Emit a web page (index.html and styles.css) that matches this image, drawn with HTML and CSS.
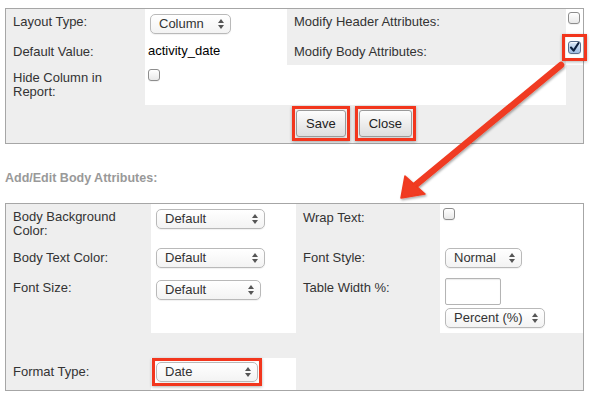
FILE: index.html
```html
<!DOCTYPE html>
<html>
<head>
<meta charset="utf-8">
<link rel="stylesheet" href="styles.css">
</head>
<body>
<div class="page">
  <div class="panel panel-top">
    <div class="cell lab pt6">Layout Type:</div>
    <div class="cell val white pt5"><span class="sel w81"><span class="sel-t">Column</span><svg class="updown" width="6" height="10" viewBox="0 0 6 10"><path d="M0 4 L3 0 L6 4 Z M0 6 L3 10 L6 6 Z"/></svg></span></div>
    <div class="cell lab pt6">Modify Header Attributes:</div>
    <div class="cell val2 white pt3"><span class="cb"></span></div>

    <div class="cell lab pt7">Default Value:</div>
    <div class="cell val white pt6"><span class="value">activity_date</span></div>
    <div class="cell lab pt7">Modify Body Attributes:</div>
    <div class="cell val2 white pt3"><span class="cb checked mark mark-wide"><svg width="11" height="11" viewBox="0 0 11 11"><path d="M2 5.5 L4.6 8.6 L9.4 1.2" fill="none" stroke="#0c1f3d" stroke-width="2.1" stroke-linecap="round" stroke-linejoin="round"/></svg></span></div>

    <div class="cell lab pt6">Hide Column in Report:</div>
    <div class="cell val white pt4"><span class="cb"></span></div>
    <div class="cell white"></div>
    <div class="cell"></div>

    <div class="cell span2"></div>
    <div class="cell buttons span2">
      <button class="btn mark" type="button">Save</button>
      <button class="btn mark" type="button">Close</button>
    </div>
  </div>

  <div class="section-title">Add/Edit Body Attributes:</div>

  <div class="panel panel-body">
    <div class="cell lab pt6">Body Background Color:</div>
    <div class="cell val white pt5"><span class="sel w109"><span class="sel-t">Default</span><svg class="updown" width="6" height="10" viewBox="0 0 6 10"><path d="M0 4 L3 0 L6 4 Z M0 6 L3 10 L6 6 Z"/></svg></span></div>
    <div class="cell lab pt7">Wrap Text:</div>
    <div class="cell val white pt4"><span class="cb"></span></div>

    <div class="cell lab pt8">Body Text Color:</div>
    <div class="cell val white pt5"><span class="sel w109"><span class="sel-t">Default</span><svg class="updown" width="6" height="10" viewBox="0 0 6 10"><path d="M0 4 L3 0 L6 4 Z M0 6 L3 10 L6 6 Z"/></svg></span></div>
    <div class="cell lab pt8">Font Style:</div>
    <div class="cell val white pt5"><span class="sel w77"><span class="sel-t">Normal</span><svg class="updown" width="6" height="10" viewBox="0 0 6 10"><path d="M0 4 L3 0 L6 4 Z M0 6 L3 10 L6 6 Z"/></svg></span></div>

    <div class="cell lab pt7">Font Size:</div>
    <div class="cell val white pt6"><span class="sel w105"><span class="sel-t">Default</span><svg class="updown" width="6" height="10" viewBox="0 0 6 10"><path d="M0 4 L3 0 L6 4 Z M0 6 L3 10 L6 6 Z"/></svg></span></div>
    <div class="cell lab pt7">Table Width %:</div>
    <div class="cell val white pt4"><span class="text-input"></span><span class="sel w100"><span class="sel-t">Percent (%)</span><svg class="updown" width="6" height="10" viewBox="0 0 6 10"><path d="M0 4 L3 0 L6 4 Z M0 6 L3 10 L6 6 Z"/></svg></span></div>

    <div class="cell span4"></div>

    <div class="cell lab pt7">Format Type:</div>
    <div class="cell val white pt4"><span class="sel w102 mark"><span class="sel-t">Date</span><svg class="updown" width="6" height="10" viewBox="0 0 6 10"><path d="M0 4 L3 0 L6 4 Z M0 6 L3 10 L6 6 Z"/></svg></span></div>
    <div class="cell span2"></div>
  </div>
</div>

<svg class="annot" width="592" height="397" viewBox="0 0 592 397">
  <defs>
    <filter id="sh" x="-10%" y="-10%" width="130%" height="130%">
      <feDropShadow dx="1" dy="1.5" stdDeviation="1.2" flood-color="#000" flood-opacity="0.35"/>
    </filter>
  </defs>
  <g filter="url(#sh)" fill="#f03a20" stroke="#f03a20">
    <line x1="561" y1="65" x2="412" y2="188" stroke-width="6.5" stroke-linecap="round"/>
    <polygon points="401,198 405,176 425,194" stroke-width="1.5" stroke-linejoin="round"/>
  </g>
</svg>
</body>
</html>
```

FILE: styles.css
```css
* {
  box-sizing: border-box;
}

html,
body {
  margin: 0;
  padding: 0;
  background: #fff;
}

body {
  position: relative;
  width: 592px;
  height: 397px;
  overflow: hidden;
  font-family: "Liberation Sans", Arial, Helvetica, sans-serif;
  font-size: 13px;
  color: #333;
}

.page {
  padding: 8px 0 0 5px;
}

.panel {
  display: grid;
  width: 579px;
  border: 1px solid #a6a6a6;
  background: #eeeeee;
}

.panel-top {
  grid-template-columns: 139px 142px 279px 17px;
  grid-template-rows: 29px 27px 40px 38px;
}

.panel-body {
  grid-template-columns: 145px 145px 144px 143px;
  grid-template-rows: 39px 31px 59px 25px 32px;
}

.cell {
  line-height: 14px;
  padding: 0;
}

.lab {
  padding-left: 7px;
  padding-right: 4px;
}

.val {
  padding-left: 3px;
}

.val2 {
  padding-left: 2px;
}

.white {
  background: #fff;
}

.pt3 { padding-top: 3px; }
.pt4 { padding-top: 4px; }
.pt5 { padding-top: 5px; }
.pt6 { padding-top: 6px; }
.pt7 { padding-top: 7px; }
.pt8 { padding-top: 8px; }

.span2 {
  grid-column: span 2;
}

.span4 {
  grid-column: span 4;
}

.value {
  color: #000;
}

/* Mac-style popup select */
.sel {
  position: relative;
  display: flex;
  align-items: center;
  justify-content: space-between;
  height: 20px;
  margin-left: 2px;
  padding: 0 6px 0 8px;
  border: 1px solid #b9b9b9;
  border-radius: 5px;
  background: linear-gradient(#ffffff, #f3f3f3);
  box-shadow: 0 1px 1px rgba(0, 0, 0, 0.06);
  color: #333;
  font-size: 13px;
  line-height: 18px;
  white-space: nowrap;
}

.sel-t {
  display: block;
}

.updown {
  display: block;
  fill: #555;
}

.w77 { width: 77px; }
.w81 { width: 81px; }
.w100 { width: 100px; }
.w102 { width: 102px; }
.w105 { width: 105px; }
.w109 { width: 109px; }

.text-input {
  display: block;
  width: 56px;
  height: 27px;
  margin: 0 0 3px 2px;
  border: 1px solid #b4b4b4;
  border-radius: 2px;
  background: #fff;
  box-shadow: inset 0 1px 1px rgba(0, 0, 0, 0.08);
}

/* checkbox */
.cb {
  position: relative;
  display: flex;
  align-items: center;
  justify-content: center;
  width: 12px;
  height: 12px;
  border: 1px solid #8d8d8d;
  border-radius: 3px;
  background: linear-gradient(#ffffff, #e9e9e9);
  box-shadow: inset 0 1px 1px rgba(255, 255, 255, 0.8), 0 1px 0 rgba(0, 0, 0, 0.05);
}

.cb.checked {
  width: 13px;
  height: 13px;
  border-color: #5a6f8e;
  background: linear-gradient(#dbe8f7, #9dbde3);
}

.cb.checked svg {
  display: block;
  margin-top: -1px;
}

/* annotation boxes (square red frames drawn over the controls) */
.mark {
  position: relative;
}

.mark::after {
  content: "";
  position: absolute;
  top: -5px;
  right: -5px;
  bottom: -5px;
  left: -5px;
  border: 3px solid #f2361d;
  box-shadow: 0 1px 3px rgba(0, 0, 0, 0.3), inset 0 0 1px rgba(0, 0, 0, 0.15);
  pointer-events: none;
}

.mark-wide::after {
  top: -8px;
  right: -7px;
  bottom: -8px;
  left: -7px;
}

.buttons {
  display: flex;
  align-items: flex-start;
  gap: 13px;
  padding: 5px 0 0 9px;
}

.btn {
  height: 27px;
  margin: 0;
  padding: 0 9px;
  border: 1px solid #9a9a9a;
  border-radius: 3px;
  background: linear-gradient(#fdfdfd, #dedede);
  color: #222;
  font-family: "Liberation Sans", Arial, Helvetica, sans-serif;
  font-size: 13px;
  line-height: 25px;
  box-shadow: 0 1px 1px rgba(0, 0, 0, 0.1);
}

.section-title {
  margin: 27px 0 18px;
  color: #999;
  font-size: 12.5px;
  font-weight: bold;
  line-height: 14px;
}

.annot {
  position: absolute;
  top: 0;
  left: 0;
  pointer-events: none;
  overflow: visible;
}
```
